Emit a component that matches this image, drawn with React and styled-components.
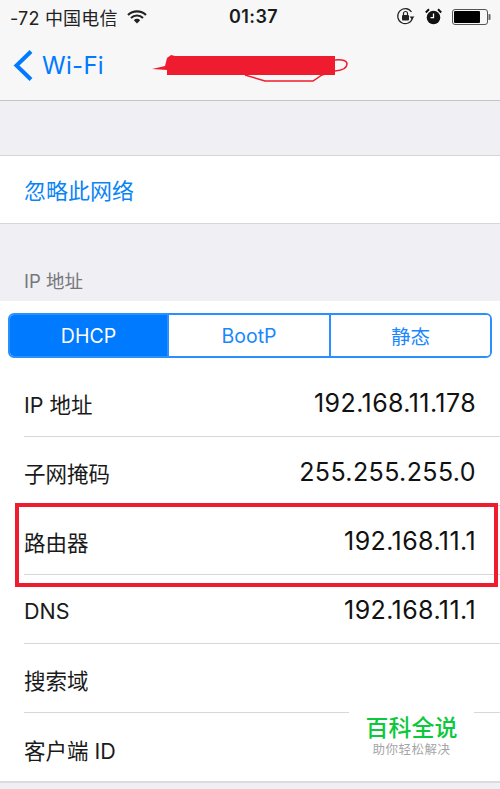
import React from "react";
import styled, { createGlobalStyle } from "styled-components";

const Global = createGlobalStyle`
  html, body { margin: 0; padding: 0; background: #efeff4; }
  * { box-sizing: border-box; }
`;
const CJK = `"Inter", "Noto Sans CJK SC", sans-serif`;

const Page = styled.div`
  position: relative; width: 500px; height: 789px; overflow: hidden;
  background: #efeff4; font-family: ${CJK}; color: #111;
`;
const Header = styled.header`
  height: 101px; background: #f7f7f8; border-bottom: 1px solid #c4c4c6;
  display: flex; flex-direction: column;
`;
const StatusBar = styled.div`
  height: 33px; padding: 0 9px 0 10px; display: grid; grid-template-columns: 1fr auto 1fr; align-items: center;
  font-size: 18px; color: #222;
`;
const StatusLeft = styled.div`display: flex; align-items: center; gap: 9px; white-space: nowrap;`;
const Carrier = styled.span`letter-spacing: 0.2px;`;
const Time = styled.div`font-size: 18px; font-weight: 600; letter-spacing: 0.4px; color: #1a1a1a; margin-left: 6px;`;
const StatusRight = styled.div`display: flex; align-items: center; justify-content: flex-end; gap: 10px;`;
const Nav = styled.div`
  flex: 1; display: flex; align-items: center; gap: 8px; padding: 0 0 2px 13px; color: #007aff;
`;
const BackLabel = styled.span`font-size: 24px; letter-spacing: 0.3px;`;
const Scribble = styled.svg`position: absolute; left: 150px; top: 50px;`;
const Spacer = styled.div`height: ${p => p.$h}px;`;
const ActionCell = styled.div`
  height: 69px; background: #fff; border-top: 1px solid #d6d6d8; border-bottom: 1px solid #d6d6d8;
  display: flex; align-items: center; padding: 0 24px 2px; font-size: 22px; color: #0a84f5;
`;
const SectionTitle = styled.div`
  height: 77px; padding: 45px 24px 0; font-size: 18.5px; color: #77777b; line-height: 24px;
`;
const Group = styled.section`background: #fff; height: 482px; border-bottom: 2px solid #dcdce0;`;
const SegWrap = styled.div`padding: 12px 8px 10px;`;
const Seg = styled.div`
  height: 45px; display: grid; grid-template-columns: 157px 162px 1fr; border: 2px solid #2b90ff;
  border-radius: 6px; overflow: hidden; font-size: 19.5px;
`;
const SegItem = styled.div`
  display: flex; align-items: center; justify-content: center;
  background: ${p => p.$active ? "#007aff" : "#fff"}; color: ${p => p.$active ? "#fff" : "#1a87ff"};
  border-left: ${p => p.$first ? "none" : "2px solid #2b90ff"};
`;
const Row = styled.div`
  height: 69px; margin-left: 24px; padding: 3px 24px 0 0; display: flex; align-items: center; justify-content: space-between;
  border-bottom: ${p => p.$last ? "none" : "1px solid #d8d8da"};
`;
const RowLabel = styled.span`font-size: 21.5px; color: #1a1a1a;`;
const RowValue = styled.span`font-size: 25px; letter-spacing: 0.4px; color: #111; position: relative; top: -1px;`;
const Highlight = styled.div`
  position: absolute; left: 15px; top: 503px; width: 483px; height: 84px; border: 4px solid #ee1c2e;
`;
const Watermark = styled.div`
  position: absolute; left: 349px; top: 700px; width: 125px; height: 62px; background: #fff;
  display: flex; flex-direction: column; align-items: center; padding-top: 15px;
`;
const WmTitle = styled.div`font-size: 23px; line-height: 26px; font-weight: 500; color: #0cc83c;`;
const WmSub = styled.div`font-size: 12.5px; line-height: 18px; color: #a5a5a5; letter-spacing: 0.5px;`;

const Wifi = () => (
  <svg width="20" height="14" viewBox="0 0 20 14">
    <path d="M1 5a13 13 0 0 1 18 0M4 8a8.500 8.500 0 0 1 12 0" fill="none" stroke="#222" strokeWidth="2.200" />
    <path d="M6.800 10.200a4.500 4.500 0 0 1 6.400 0L10 13.500z" fill="#222" />
  </svg>
);
const RotationLock = () => (
  <svg width="19" height="19" viewBox="0 0 19 19">
    <path d="M16.500 11A7.500 7.500 0 1 1 15.500 5" fill="none" stroke="#222" strokeWidth="1.200" />
    <path d="M13.500 9.500h5l-2.500 3z" fill="#222" />
    <rect x="6" y="8" width="7" height="5.500" rx="1" fill="#222" />
    <path d="M7.500 8V6.500a2 2 0 0 1 4 0V8" fill="none" stroke="#222" strokeWidth="1.200" />
  </svg>
);
const Alarm = () => (
  <svg width="17" height="17" viewBox="0 0 17 17">
    <circle cx="8.500" cy="9.500" r="6.800" fill="#111" />
    <path d="M8.500 5.500v4.200H5.500" fill="none" stroke="#fff" strokeWidth="1.300" />
    <path d="M0.800 4.500L4 1.200M16.200 4.500L13 1.200" stroke="#111" strokeWidth="2" />
  </svg>
);
const Battery = () => (
  <svg width="39" height="16" viewBox="0 0 39 16">
    <rect x="0.500" y="0.500" width="35" height="15" rx="2.500" fill="#f7f7f8" stroke="#555" />
    <rect x="2" y="2" width="26" height="12" rx="1" fill="#000" />
    <path d="M36.500 5h1a1 1 0 0 1 1 1v4a1 1 0 0 1-1 1h-1z" fill="#666" />
  </svg>
);
const Chevron = () => (
  <svg width="21" height="33" viewBox="0 0 21 33">
    <path d="M18 2.500L3.500 16.500L18 30.500" fill="none" stroke="#007aff" strokeWidth="4" />
  </svg>
);
const RedMark = () => (
  <Scribble width="200" height="34" viewBox="0 0 200 34">
    <path d="M2 19L15 16L17 8L21 5L25 6H185V25H93H17V20Z" fill="#ee1c2e" />
    <path d="M185 10Q197 9 197 14Q197 20 185 21L172 25L163 31H115L95 25" fill="none" stroke="#ee1c2e" strokeWidth="1.500" />
  </Scribble>
);

const rows = [
  ["IP 地址", "192.168.11.178"],
  ["子网掩码", "255.255.255.0"],
  ["路由器", "192.168.11.1"],
  ["DNS", "192.168.11.1"],
  ["搜索域", ""],
  ["客户端 ID", ""],
];

export default function App() {
  return (
    <Page>
      <Global />
      <Header>
        <StatusBar>
          <StatusLeft>
            <Carrier>-72 中国电信</Carrier>
            <Wifi />
          </StatusLeft>
          <Time>01:37</Time>
          <StatusRight>
            <RotationLock />
            <Alarm />
            <Battery />
          </StatusRight>
        </StatusBar>
        <Nav>
          <Chevron />
          <BackLabel>Wi-Fi</BackLabel>
        </Nav>
      </Header>
      <RedMark />
      <Spacer $h={54} />
      <ActionCell>忽略此网络</ActionCell>
      <SectionTitle>IP 地址</SectionTitle>
      <Group>
        <SegWrap>
          <Seg>
            <SegItem $active $first>DHCP</SegItem>
            <SegItem>BootP</SegItem>
            <SegItem>静态</SegItem>
          </Seg>
        </SegWrap>
        {rows.map(([label, value], i) => (
          <Row key={label} $last={i === rows.length - 1}>
            <RowLabel>{label}</RowLabel>
            {value && <RowValue>{value}</RowValue>}
          </Row>
        ))}
      </Group>
      <Highlight />
      <Watermark>
        <WmTitle>百科全说</WmTitle>
        <WmSub>助你轻松解决</WmSub>
      </Watermark>
    </Page>
  );
}
